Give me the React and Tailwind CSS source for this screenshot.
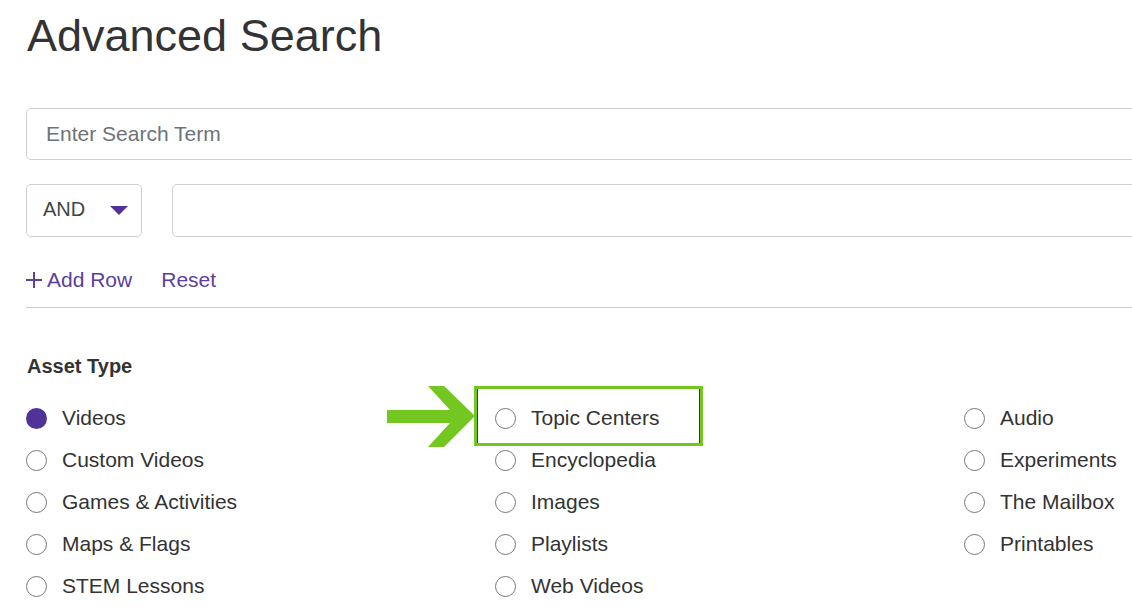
import React from 'react';

const col1 = ['Videos', 'Custom Videos', 'Games & Activities', 'Maps & Flags', 'STEM Lessons'];
const col2 = ['Topic Centers', 'Encyclopedia', 'Images', 'Playlists', 'Web Videos'];
const col3 = ['Audio', 'Experiments', 'The Mailbox', 'Printables'];

function Radio({ label, checked, highlight }) {
  return (
    <label className="relative flex items-center h-[42px] gap-[15px] cursor-pointer">
      {checked ? (
        <span className="w-[21px] h-[21px] rounded-full bg-[#4f3399] shrink-0" />
      ) : (
        <span className="w-[21px] h-[21px] rounded-full border border-[#777] bg-white shrink-0" />
      )}
      <span className="text-[21px] text-[#333] leading-6">{label}</span>
      {highlight && (
        <>
          {/* green callout box + arrow drawn over the option */}
          <div className="absolute left-[-21px] top-[-11px] w-[229px] h-[60px] border-[3px] border-[#74c620] pointer-events-none">
            <div className="absolute inset-0 border-x border-[#2f3f1c]" />
          </div>
          <svg className="absolute left-[-108px] top-[-11px] pointer-events-none" width="88" height="62" viewBox="0 0 88 62">
            <polygon
              fill="#74c620"
              points="0,24 63,24 41,0 57,0 88,30 57,61 41,61 63,37 0,37"
            />
          </svg>
        </>
      )}
    </label>
  );
}

export default function App() {
  return (
    <div
      className="w-[1132px] h-[610px] overflow-hidden bg-white"
      style={{ fontFamily: '"Liberation Sans", Arial, sans-serif' }}
    >
      <div className="w-[1433px] pl-[26px]">
        <h1 className="text-[45px] leading-[45px] text-[#333] mt-[13px] ml-px">Advanced Search</h1>

        <input
          type="text"
          placeholder="Enter Search Term"
          className="mt-[50px] block w-full h-[52px] rounded-[5px] border border-[#cfcfcf] pl-[19px] text-[21px] text-[#333] placeholder:text-[#6c737a] outline-none"
        />

        <div className="flex gap-[30px] mt-6">
          <div className="w-[116px] h-[53px] rounded-[5px] border border-[#cfcfcf] flex items-center justify-between pl-4 pr-[13px]">
            <span className="text-[20px] leading-6 text-[#444] -mt-[3px]">AND</span>
            <svg width="18" height="9" viewBox="0 0 18 9">
              <polygon points="0,0 18,0 9,9" fill="#4f3399" />
            </svg>
          </div>
          <input
            type="text"
            className="flex-1 h-[53px] rounded-[5px] border border-[#cfcfcf] outline-none"
          />
        </div>

        <div className="flex items-center mt-[31px] h-6 text-[21px] text-[#5a3fa0]">
          <button className="flex items-center gap-[5px]">
            <svg width="16" height="16" viewBox="0 0 16 16">
              <path d="M8 0v16M0 8h16" stroke="#5a3fa0" strokeWidth="2" />
            </svg>
            <span>Add Row</span>
          </button>
          <button className="ml-[29px]">Reset</button>
        </div>

        <div className="mt-[15px] h-px bg-[#cccccc]" />

        <h2 className="mt-[46px] text-[20px] leading-6 font-bold text-[#333] ml-px">Asset Type</h2>

        <div className="mt-[19px] grid grid-cols-[469px_469px_469px]">
          <div>
            {col1.map((l, i) => (
              <Radio key={l} label={l} checked={i === 0} />
            ))}
          </div>
          <div>
            {col2.map((l, i) => (
              <Radio key={l} label={l} highlight={i === 0} />
            ))}
          </div>
          <div>
            {col3.map((l) => (
              <Radio key={l} label={l} />
            ))}
          </div>
        </div>
      </div>
    </div>
  );
}
